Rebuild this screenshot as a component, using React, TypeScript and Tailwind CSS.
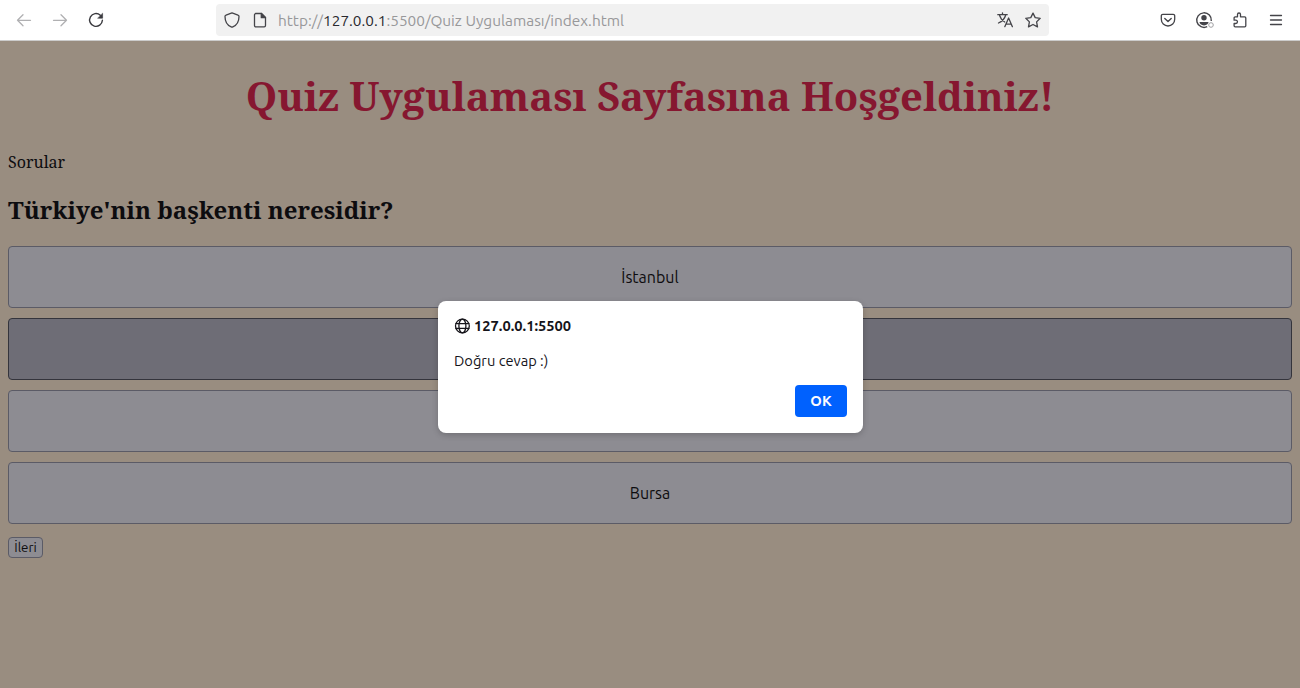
import type { ReactNode } from "react";

const serif = "font-['Noto_Serif','DejaVu_Serif_Condensed','DejaVu_Serif',serif]";
const sans = "font-['Ubuntu','Noto_Sans',sans-serif]";

function Icon({ children, className = "" }: { children: ReactNode; className?: string }) {
  return (
    <svg
      viewBox="0 0 16 16"
      className={`size-4 shrink-0 ${className}`}
      fill="none"
      stroke="currentColor"
      strokeWidth="1.3"
      strokeLinecap="round"
      strokeLinejoin="round"
    >
      {children}
    </svg>
  );
}

function Toolbar() {
  return (
    <header className={`flex h-[41px] items-center border-b border-[#cccccc] bg-white text-[#444449] ${sans}`}>
      <div className="flex w-[216px] items-center gap-5 pl-4">
        <Icon className="text-[#b0b0b2]">
          <path d="M14.500 8.300H1.500M7 2.800 1.500 8.300 7 13.800" />
        </Icon>
        <Icon className="text-[#b0b0b2]">
          <path d="M1.500 8.300h13M9 2.800 14.500 8.300 9 13.800" />
        </Icon>
        <Icon className="text-[#3a3a3f]">
          <path d="M12.3 3.2A6.400 6.400 0 1 0 14.400 8.300" strokeWidth="1.4" />
          <path d="M14.6 1.600v4.600H10z" fill="currentColor" strokeWidth="0.6" />
        </Icon>
      </div>
      <div className="flex h-8 w-[833px] items-center rounded bg-[#f1f1f1] pr-2 pl-2">
        <Icon>
          <path d="M8 .9 14 3.1c.7.2 1 .7 1 1.300 0 4.200-2 8.600-6.200 10.500a2 2 0 0 1-1.600 0C3 13 1 8.600 1 4.400c0-.6.3-1.100 1-1.300z" />
        </Icon>
        <Icon className="ml-3">
          <path d="M3.500 1.500h6l4 4v8a1.300 1.300 0 0 1-1.300 1.300H3.800a1.300 1.300 0 0 1-1.300-1.300V2.800a1.300 1.300 0 0 1 1.300-1.300z" />
          <path d="M9.300 1.500v4.200h4.200z" fill="currentColor" />
        </Icon>
        <div className="ml-[10px] flex-1 pt-px text-[15.400px] leading-5 whitespace-nowrap text-[#98989a]">
          http://<span className="text-[#29292e]">127.0.0.1</span>:5500/Quiz Uygulaması/index.html
        </div>
        <Icon>
          <path d="M.8 2.700h9.400M5.500.8v1.900M2.500 3.200c.8 3 3 5.500 5.200 6.800M8.700 3C7.800 6.200 5 9.500 1.500 11M7.800 14.700 11.600 6l3.800 8.700M9 12.200h5.200" />
        </Icon>
        <Icon className="ml-3">
          <path d="m8 1.100 2.200 4.500 5 .7-3.600 3.600.9 5L8 12.500l-4.500 2.400.9-5L.8 6.300l5-.7z" />
        </Icon>
      </div>
      <div className="ml-auto flex items-center gap-5 pr-4">
        <Icon>
          <path d="M2.800 2.300h10.400a1.500 1.500 0 0 1 1.500 1.500v3.500a6.700 6.700 0 0 1-13.400 0V3.800a1.500 1.500 0 0 1 1.500-1.500z" />
          <path d="M4.800 6.500 8 9.500l3.200-3" strokeWidth="1.4" />
        </Icon>
        <svg viewBox="0 0 18 16" className="-mr-[2px] h-4 w-[18px] shrink-0 overflow-visible" fill="none" stroke="currentColor">
          <path d="M11.200 14.700A7.300 7.300 0 1 1 15.300 9" strokeWidth="1.400" />
          <circle cx="8" cy="5.800" r="2.700" fill="currentColor" stroke="none" />
          <path d="M3.500 10h9c0 1.700-1.700 3.400-4.500 3.400S3.500 11.700 3.500 10z" fill="currentColor" stroke="none" />
          <circle cx="15" cy="13" r="2.300" stroke="#a0a0a3" />
        </svg>
        <Icon>
          <path d="M5.500 4.800V2.500a1.500 1.500 0 0 1 3 0v2.300h4.200a1.100 1.100 0 0 1 1.100 1.100v7.900a1.100 1.100 0 0 1-1.100 1.100H3.200a1.100 1.100 0 0 1-1.100-1.100V11.500h1.700a1.500 1.500 0 0 0 0-3.300H2.100V5.900A1.100 1.100 0 0 1 3.200 4.800z" />
        </Icon>
        <Icon>
          <path d="M2.500 3.500h11M2.500 8h11M2.500 12.500h11" />
        </Icon>
      </div>
    </header>
  );
}

function Option({ label, selected = false }: { label: string; selected?: boolean }) {
  return (
    <button
      className={`flex h-[62px] w-full items-center justify-center rounded border text-[16px] text-[#0d0c0f] ${sans} ${
        selected ? "border-[#34343c] bg-[#6e6d76]" : "border-[#5b5b66] bg-[#8d8c92]"
      }`}
    >
      {label}
    </button>
  );
}

function AlertDialog() {
  return (
    <div
      role="alertdialog"
      className={`absolute top-[301px] left-[438px] flex h-[132px] w-[425px] flex-col rounded-lg bg-white p-4 text-[#15141a] shadow-[0_2px_6px_rgba(0,0,0,0.2)] ${sans}`}
    >
      <div className="flex h-[18px] items-center gap-1">
        <Icon className="mb-px">
          <circle cx="8.400" cy="8" r="6.900" />
          <ellipse cx="8.400" cy="8" rx="3.500" ry="6.900" />
          <path d="M1.900 5.700h13M1.900 10.300h13" />
        </Icon>
        <span className="text-[14.667px] leading-[18px] font-bold">127.0.0.1:5500</span>
      </div>
      <p className="mt-[17px] text-[14.667px] leading-[18px]">Doğru cevap :)</p>
      <button className="mt-auto h-8 w-[52px] self-end rounded bg-[#0061fe] text-[14.667px] font-semibold text-[#fbfbfe]">
        OK
      </button>
    </div>
  );
}

export default function App() {
  return (
    <div className="relative flex h-[688px] w-[1300px] flex-col overflow-hidden bg-[#998d80]">
      <Toolbar />
      <main className="flex flex-col px-2">
        <h1 className={`mt-[28px] h-[54px] text-center text-[40px] leading-[54px] font-bold whitespace-nowrap text-[#861730] ${serif}`}>
          Quiz Uygulaması Sayfasına Hoşgeldiniz!
        </h1>
        <p className={`mt-[28px] h-[22px] text-[16px] leading-[22px] text-[#0d0c0f] ${serif}`}>Sorular</p>
        <h2 className={`mt-5 h-[33px] text-[24px] leading-[33px] font-bold text-[#0d0c0f] ${serif}`}>
          Türkiye'nin başkenti neresidir?
        </h2>
        <div className="mt-5 flex flex-col gap-[10px]">
          <Option label="İstanbul" />
          <Option label="" selected />
          <Option label="" />
          <Option label="Bursa" />
        </div>
        <button
          className={`mt-[13px] flex h-[21px] w-[35px] items-center justify-center rounded border border-[#5b5b66] bg-[#8d8c92] text-[13.333px] leading-none text-[#0d0c0f] ${sans}`}
        >
          İleri
        </button>
      </main>
      <AlertDialog />
    </div>
  );
}
